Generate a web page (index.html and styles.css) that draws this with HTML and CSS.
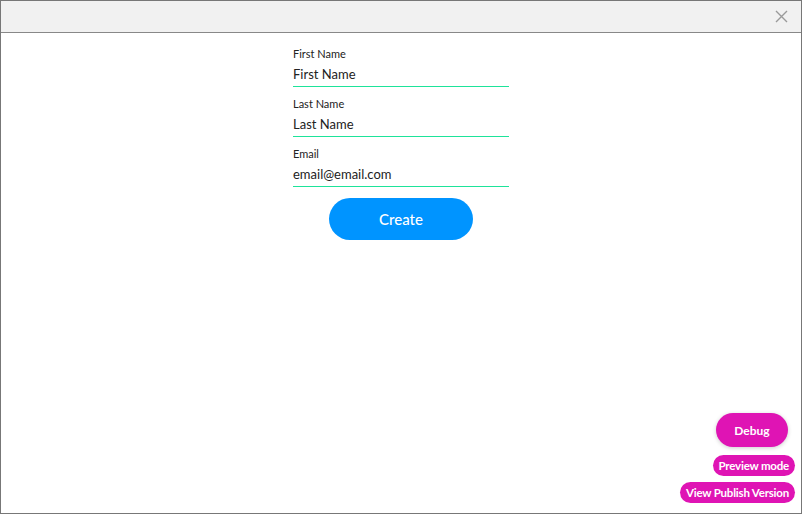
FILE: index.html
```html
<!DOCTYPE html>
<html>
<head>
<meta charset="utf-8">
<link rel="stylesheet" href="styles.css">
</head>
<body>
<div class="frame">
  <div class="header">
    <svg class="close" width="13" height="13" viewBox="0 0 13 13"><path d="M1 1L12 12M12 1L1 12" stroke="#9a9a9a" stroke-width="1.4" fill="none"/></svg>
  </div>
  <div class="content">
    <form class="form">
      <div class="field">
        <div class="label">First Name</div>
        <div class="input">First Name</div>
      </div>
      <div class="field">
        <div class="label">Last Name</div>
        <div class="input">Last Name</div>
      </div>
      <div class="field">
        <div class="label">Email</div>
        <div class="input">email@email.com</div>
      </div>
      <div class="btn-row"><div class="create">Create</div></div>
    </form>
  </div>
  <div class="tools">
    <div class="pill debug">Debug</div>
    <div class="pill small">Preview mode</div>
    <div class="pill small">View Publish Version</div>
  </div>
</div>
</body>
</html>
```
FILE: styles.css
```css
html, body { margin: 0; padding: 0; }
body { font-family: Lato, "Open Sans", sans-serif; background: #fff; }
.frame {
  position: relative;
  width: 802px; height: 514px;
  box-sizing: border-box;
  border: 1px solid #777;
  display: flex; flex-direction: column;
}
.header {
  height: 31px;
  background: #f1f1f1;
  border-bottom: 1px solid #888;
  display: flex; justify-content: flex-end; align-items: center;
  padding-right: 13px;
}
.close { display: block; }
.content { flex: 1; display: flex; justify-content: center; padding-top: 13px; }
.form { width: 216px; display: flex; flex-direction: column; gap: 9px; }
.field { border-bottom: 1px solid #1ee39a; height: 41px; box-sizing: border-box; }
.label { font-size: 11px; color: #222; line-height: 15px; height: 15px; }
.input { font-size: 13px; color: #222; line-height: 18px; margin-top: 4px; }
.btn-row { display: flex; justify-content: center; margin-top: 2px; }
.create {
  width: 144px; height: 42px; border-radius: 21px;
  background: #0094ff; color: #fff;
  font-size: 15px; font-weight: 500;
  display: flex; align-items: center; justify-content: center;
}
.tools {
  position: absolute; right: 6px; bottom: 10px;
  display: flex; flex-direction: column; align-items: flex-end; gap: 6px;
}
.pill {
  background: #df14b4; color: #fff; font-weight: 700;
  display: flex; align-items: center; justify-content: center;
}
.debug {
  width: 72px; height: 34px; border-radius: 17px; font-size: 12px;
  margin-right: 7px; margin-bottom: 2px;
  box-shadow: 0 1px 4px rgba(0,0,0,0.2);
}
.small { height: 21px; border-radius: 11px; font-size: 11.5px; padding: 0 6px; letter-spacing: -0.2px; }
```
